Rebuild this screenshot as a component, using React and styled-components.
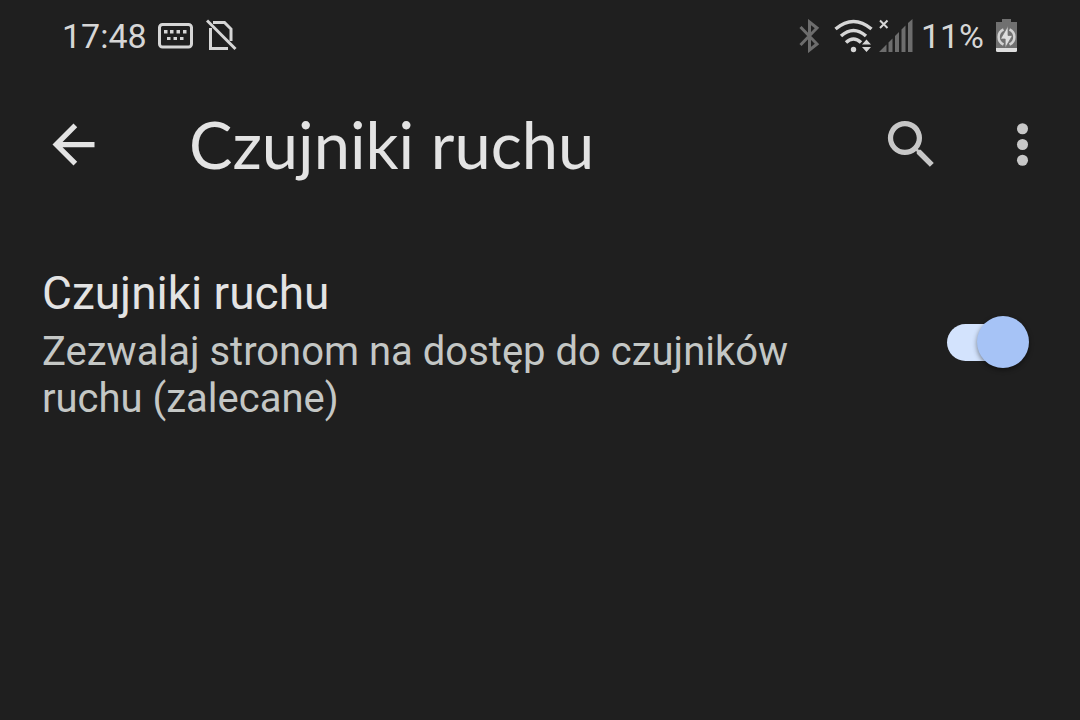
import React, { useState } from "react";
import styled, { createGlobalStyle } from "styled-components";

const GlobalStyle = createGlobalStyle`
    * {
        box-sizing: border-box;
    }
    body {
        margin: 0;
        background: #1f1f1f;
        color: #e3e3e3;
        font-family: Roboto, "Liberation Sans", sans-serif;
    }
`

const StatusBar = styled.div`
    height: 72px;
    padding: 0 63px 0 62px;
    display: flex;
    align-items: center;
    justify-content: space-between;
    color: #d6d6d6;
`

const StatusGroup = styled.div`
    display: flex;
    align-items: center;
    gap: ${props => props.$gap};
`

const StatusText = styled.span`
    font-size: 34px;
    line-height: 40px;
`

const Glyph = styled.svg`
    display: block;
    flex: none;
`

const AppBar = styled.header`
    padding: 40px 26px 41px 42px;
    display: flex;
    align-items: center;
`

const IconButton = styled.button`
    width: 63px;
    height: 63px;
    padding: 0;
    border: 0;
    flex: none;
    background: none;
    color: ${props => props.$bright ? "#e3e3e3" : "#c7c7c7"};
    cursor: pointer;

    svg {
        display: block;
        width: 100%;
        height: 100%;
        fill: currentColor;
    }
`

const Title = styled.h1`
    flex: 1;
    margin: 0 0 0 84px;
    font-family: Lato, Roboto, sans-serif;
    font-size: 65px;
    line-height: 64px;
    font-weight: 400;
`

const Actions = styled.div`
    display: flex;
    gap: 48px;
`

const Setting = styled.label`
    padding: 44px 51px 44px 42px;
    display: flex;
    align-items: center;
    gap: 60px;
    cursor: pointer;
`

const SettingText = styled.span`
    flex: 1;
`

const SettingName = styled.span`
    display: block;
    margin-bottom: 3px;
    font-size: 46px;
    line-height: 64px;
`

const SettingSummary = styled.span`
    display: block;
    color: #c4c7c5;
    font-size: 40px;
    line-height: 47px;
`

const Switch = styled.input`
    appearance: none;
    position: relative;
    flex: none;
    width: 82px;
    height: 52px;
    margin: 0;
    cursor: pointer;

    &::before {
        content: "";
        position: absolute;
        top: 8px;
        left: 0;
        width: 74px;
        height: 37px;
        border-radius: 19px;
        background: #5f6368;
    }
    &::after {
        content: "";
        position: absolute;
        top: 0;
        left: 0;
        width: 52px;
        height: 52px;
        border-radius: 50%;
        background: #dadce0;
        box-shadow: 0 2px 5px rgba(0, 0, 0, 0.45);
    }
    &:checked::before {
        background: #d3e3fd;
    }
    &:checked::after {
        left: 30px;
        background: #a6c3f6;
    }
`

const KeyboardIcon = () => (
    <Glyph width="37" height="34" viewBox="0 0 37 34" aria-hidden="true">
        <rect x="1.5" y="5.5" width="32" height="22.5" rx="3" fill="none" stroke="currentColor" strokeWidth="3" />
        <path
            d="M6 11h3.500v3.500H6zM12 11h3.500v3.500H12zM18.500 11H22v3.500H18.500zM25 11h3.500v3.500H25zM9 18h3.500v3H9zM15.500 18H19v3H15.500zM22 18h3.500v3H22z"
            fill="currentColor"
        />
    </Glyph>
)

const NoSimIcon = () => (
    <Glyph width="31" height="34" viewBox="0 0 31 34" aria-hidden="true">
        <g fill="none" stroke="currentColor" strokeWidth="3">
            <path d="M7 3.500H18.500L25 10V22" />
            <path d="M4.500 9V29.500H22" />
            <path d="M1 1.500L29.500 30" />
        </g>
    </Glyph>
)

const BluetoothIcon = () => (
    <Glyph width="28" height="34" viewBox="0 0 28 34" aria-hidden="true">
        <path d="M1.500 8L18 25L10.500 31V3L18 9L1.500 26" fill="none" stroke="#6d6d6d" strokeWidth="3" />
    </Glyph>
)

const WifiIcon = () => (
    <Glyph width="40" height="34" viewBox="0 0 40 34" aria-hidden="true">
        <g fill="none" stroke="currentColor" strokeWidth="3.500">
            <path d="M2.500 10Q20.500 -5 38.500 10" />
            <path d="M8 17Q20.500 6 33 17" />
            <path d="M13 23.500Q20.500 16.500 28 23.500" />
        </g>
        <circle cx="20.500" cy="30.500" r="2.700" fill="currentColor" />
        <path d="M29 25.500L33.500 20.500L38 25.500ZM29 28L33.500 33L38 28Z" fill="currentColor" />
    </Glyph>
)

const SignalIcon = () => (
    <Glyph width="36" height="34" viewBox="0 0 36 34" aria-hidden="true">
        <path d="M1 1.500L8.500 9M8.500 1.500L1 9" stroke="currentColor" strokeWidth="2" />
        <path
            d="M0 33L7.500 25.500V33ZM9.500 23.500L13.500 19.500V33H9.500ZM16 17L20 13V33H16ZM22.500 10.500L26.500 6.500V33H22.500ZM29 4L33.500 0V33H29Z"
            fill="#6d6d6d"
        />
    </Glyph>
)

const BatteryIcon = () => (
    <Glyph width="27" height="34" viewBox="-6 0 27 34" aria-hidden="true">
        <path d="M6 0H15V3H21V29H0V3H6Z" fill="#707070" />
        <path d="M0 29H21V31.500Q21 33 19.500 33H1.500Q0 33 0 31.500Z" fill="#dedede" />
        <path
            d="M7.500 10.500A8.200 8.200 0 0 0 7.500 25.500M13.500 10.500A8.200 8.200 0 0 1 13.500 25.500"
            fill="none"
            stroke="#d2d2d2"
            strokeWidth="2.500"
        />
        <path d="M12 7L4.500 20H9.200V29L16.500 16.500H12Z" fill="#dedede" stroke="#707070" strokeWidth=".7" />
    </Glyph>
)

const App = () => {
    const [allowed, setAllowed] = useState(true)

    return (
        <>
            <GlobalStyle />
            <StatusBar>
                <StatusGroup $gap="11px">
                    <StatusText>17:48</StatusText>
                    <KeyboardIcon />
                    <NoSimIcon />
                </StatusGroup>
                <StatusGroup $gap="6px">
                    <BluetoothIcon />
                    <WifiIcon />
                    <SignalIcon />
                    <StatusText>11%</StatusText>
                    <BatteryIcon />
                </StatusGroup>
            </StatusBar>
            <AppBar>
                <IconButton $bright aria-label="Wstecz">
                    <svg viewBox="0 0 24 24">
                        <path d="M20 11H7.830l5.590-5.590L12 4l-8 8 8 8 1.410-1.410L7.830 13H20v-2z" />
                    </svg>
                </IconButton>
                <Title>Czujniki ruchu</Title>
                <Actions>
                    <IconButton aria-label="Szukaj">
                        <svg viewBox="0 0 24 24">
                            <path d="M15.500 14h-.79l-.28-.27A6.471 6.471 0 0 0 16 9.500 6.500 6.500 0 1 0 9.500 16c1.610 0 3.090-.59 4.230-1.570l.27.28v.79l5 4.990L20.490 19l-4.990-5zm-6 0C7.010 14 5 11.990 5 9.500S7.010 5 9.500 5 14 7.010 14 9.500 11.990 14 9.500 14z" />
                        </svg>
                    </IconButton>
                    <IconButton aria-label="Więcej opcji">
                        <svg viewBox="0 0 24 24">
                            <circle cx="12" cy="6" r="2.100" />
                            <circle cx="12" cy="12" r="2.100" />
                            <circle cx="12" cy="18" r="2.100" />
                        </svg>
                    </IconButton>
                </Actions>
            </AppBar>
            <main>
                <Setting>
                    <SettingText>
                        <SettingName>Czujniki ruchu</SettingName>
                        <SettingSummary>
                            Zezwalaj stronom na dostęp do czujników ruchu (zalecane)
                        </SettingSummary>
                    </SettingText>
                    <Switch
                        type="checkbox"
                        role="switch"
                        checked={allowed}
                        onChange={e => setAllowed(e.target.checked)}
                    />
                </Setting>
            </main>
        </>
    )
}

export default App;
